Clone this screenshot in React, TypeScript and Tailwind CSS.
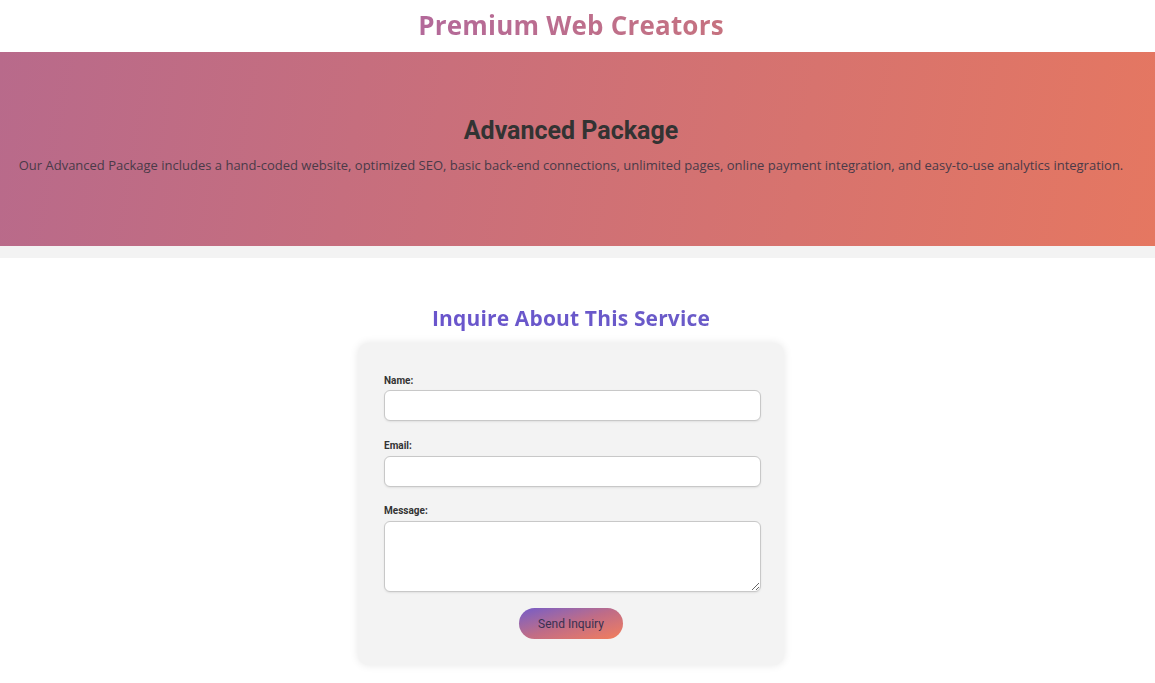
import React from "react";

export default function App() {
  const head = { fontFamily: '"Open Sans", "Noto Sans", sans-serif' };
  const roboto = { fontFamily: 'Roboto, "Liberation Sans", sans-serif' };
  return (
    <div className="min-h-[683px] bg-white" style={roboto}>
      <header className="h-[52px] flex items-center justify-center pr-[13px]">
        <h1
          className="text-[26px] font-bold bg-gradient-to-r from-[#b3699a] to-[#c6727f] bg-clip-text text-transparent tracking-[0.2px] -mt-[2px]"
          style={head}
        >
          Premium Web Creators
        </h1>
      </header>
      <section className="h-[194px] bg-[linear-gradient(100deg,#b86a8b,#e57761)] flex flex-col items-center pt-[65px] pr-[13px]">
        <h2 className="text-[25px] font-bold text-[#333] leading-[28px]">Advanced Package</h2>
        <p className="mt-[11px] text-[13px] text-[#4a3a48]" style={head}>
          Our Advanced Package includes a hand-coded website, optimized SEO, basic back-end connections, unlimited pages, online payment integration, and easy-to-use analytics integration.
        </p>
      </section>
      <div className="h-[12px] bg-[#f3f3f3]" />
      <section className="flex flex-col items-center pt-[45px] pr-[13px]">
        <h2
          className="text-[21px] font-bold bg-gradient-to-r from-[#6a55cc] to-[#6a5bc8] bg-clip-text text-transparent leading-[30px] tracking-[0.15px]"
          style={head}
        >
          Inquire About This Service
        </h2>
        <form className="mt-[10px] w-[426px] bg-[#f3f3f3] rounded-[10px] shadow-[0_0_8px_rgba(0,0,0,0.1)] pl-[26px] pr-[23px] pt-[32px] pb-[26px] flex flex-col">
          <label className="text-[10px] font-bold text-[#333] leading-[12px]">Name:</label>
          <input className="mt-[3px] h-[31px] w-[377px] bg-white border border-[#c8c8c8] rounded-[6px] shadow-[0_1px_2px_rgba(0,0,0,0.08)]" />
          <label className="mt-[19px] text-[10px] font-bold text-[#333] leading-[12px]">Email:</label>
          <input className="mt-[4px] h-[31px] w-[377px] bg-white border border-[#c8c8c8] rounded-[6px] shadow-[0_1px_2px_rgba(0,0,0,0.08)]" />
          <label className="mt-[18px] text-[10px] font-bold text-[#333] leading-[12px]">Message:</label>
          <textarea className="mt-[4px] h-[71px] w-[377px] bg-white border border-[#c8c8c8] rounded-[6px] shadow-[0_1px_2px_rgba(0,0,0,0.08)] resize-y block" />
          <div className="flex justify-center mt-[16px] pr-[3px]">
            <button
              type="button"
              className="w-[104px] h-[31px] rounded-full bg-gradient-to-br from-[#7459c8] via-[#c06c86] to-[#f47e58] text-[12px] text-[#3a3050]"
            >
              Send Inquiry
            </button>
          </div>
        </form>
      </section>
    </div>
  );
}
